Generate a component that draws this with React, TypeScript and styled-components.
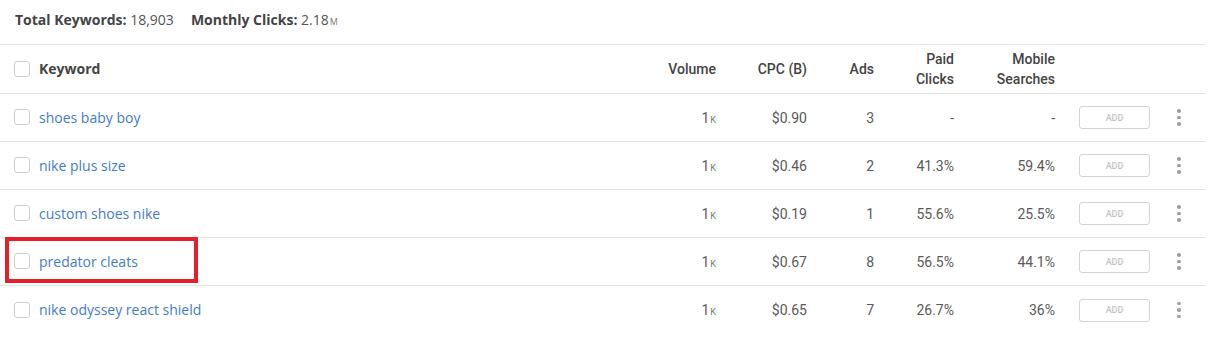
import styled, { createGlobalStyle } from "styled-components"

type Row = {
    keyword: string
    volume: string
    cpc: string
    ads: number
    paid: string
    mobile: string
    marked?: boolean
}

const rows: Row[] = [
    { keyword: "shoes baby boy", volume: "1", cpc: "$0.90", ads: 3, paid: "-", mobile: "-" },
    { keyword: "nike plus size", volume: "1", cpc: "$0.46", ads: 2, paid: "41.3%", mobile: "59.4%" },
    { keyword: "custom shoes nike", volume: "1", cpc: "$0.19", ads: 1, paid: "55.6%", mobile: "25.5%" },
    { keyword: "predator cleats", volume: "1", cpc: "$0.67", ads: 8, paid: "56.5%", mobile: "44.1%", marked: true },
    { keyword: "nike odyssey react shield", volume: "1", cpc: "$0.65", ads: 7, paid: "26.7%", mobile: "36%" },
]

export default function App() {
    return (
        <>
            <GlobalStyle />
            <Page>
                <Stats>
                    <Stat>
                        <b>Total Keywords:</b> 18,903
                    </Stat>
                    <Stat>
                        <b>Monthly Clicks:</b> 2.18<Unit>M</Unit>
                    </Stat>
                </Stats>
                <HeadRow>
                    <KeywordCell>
                        <Box />
                        <HeadLabel>Keyword</HeadLabel>
                    </KeywordCell>
                    <HeadCell>Volume</HeadCell>
                    <HeadCell>CPC (B)</HeadCell>
                    <HeadCell>Ads</HeadCell>
                    <HeadCell>
                        Paid
                        <br />
                        Clicks
                    </HeadCell>
                    <HeadCell>
                        Mobile
                        <br />
                        Searches
                    </HeadCell>
                    <div />
                    <div />
                </HeadRow>
                {rows.map((r) => (
                    <DataRow key={r.keyword}>
                        <KeywordCell $marked={r.marked}>
                            <Box />
                            <KeywordLink>{r.keyword}</KeywordLink>
                        </KeywordCell>
                        <Cell>
                            {r.volume}
                            <Unit>K</Unit>
                        </Cell>
                        <Cell>{r.cpc}</Cell>
                        <Cell>{r.ads}</Cell>
                        <Cell>{r.paid}</Cell>
                        <Cell>{r.mobile}</Cell>
                        <ButtonCell>
                            <AddButton>ADD</AddButton>
                        </ButtonCell>
                        <MenuCell>
                            <Dots>
                                <span />
                                <span />
                                <span />
                            </Dots>
                        </MenuCell>
                    </DataRow>
                ))}
            </Page>
        </>
    )
}

const GlobalStyle = createGlobalStyle`
    body {
        margin: 0;
        background: #fff;
        font-family: "Open Sans", sans-serif;
    }
`

const Page = styled.div`
    width: 1205px;
`

const Stats = styled.div`
    height: 45px;
    display: flex;
    align-items: center;
    gap: 17px;
    padding: 0 0 5px 15px;
    box-sizing: border-box;
    border-bottom: 1px solid #e3e3e3;
`

const Stat = styled.span`
    font-size: 14px;
    color: #555;

    b {
        font-weight: 700;
        color: #444;
    }
`

// small capital unit after a number, like the k in 1k
const Unit = styled.span`
    font-size: 9px;
    text-transform: uppercase;
    margin-left: 1px;
    color: #777;
`

const grid = `
    display: grid;
    grid-template-columns: 636px 80px 91px 67px 80px 101px 95px 55px;
    align-items: center;
`

const HeadRow = styled.div`
    ${grid}
    height: 49px;
    box-sizing: border-box;
    border-bottom: 1px solid #e3e3e3;
`

const DataRow = styled.div`
    ${grid}
    height: 48px;
    box-sizing: border-box;
    border-bottom: 1px solid #e3e3e3;

    &:last-child {
        border-bottom: none;
    }
`

const KeywordCell = styled.div<{ $marked?: boolean }>`
    position: relative;
    display: flex;
    align-items: center;
    gap: 9px;
    padding: 0 0 1px 14px;
    box-sizing: border-box;
    height: 100%;

    &::after {
        content: "";
        display: ${(p) => (p.$marked ? "block" : "none")};
        position: absolute;
        left: 5px;
        top: -1px;
        width: 193px;
        height: 46px;
        border: 4px solid #e5202a;
        box-sizing: border-box;
    }
`

const Box = styled.span`
    width: 14px;
    height: 14px;
    border: 1px solid #cfcfd4;
    border-radius: 3px;
    background: #fff;
`

const HeadLabel = styled.span`
    font-size: 14px;
    font-weight: 700;
    color: #444;
`

const KeywordLink = styled.a`
    font-size: 14px;
    color: #3f7dca;
    text-decoration: none;
    cursor: pointer;
`

const HeadCell = styled.div`
    text-align: right;
    font-family: Roboto, sans-serif;
    font-weight: 500;
    font-size: 14px;
    line-height: 20px;
    color: #444;
`

const Cell = styled.div`
    text-align: right;
    font-family: Roboto, sans-serif;
    font-size: 14px;
    color: #5a5a5a;
`

const ButtonCell = styled.div`
    display: flex;
    justify-content: flex-end;
`

const AddButton = styled.button`
    width: 71px;
    height: 23px;
    border: 1.5px solid #d4d4d4;
    border-radius: 3px;
    background: #fff;
    font-family: Roboto, sans-serif;
    font-size: 9px;
    font-weight: 500;
    color: #c4c4c4;
    padding: 0;
`

const MenuCell = styled.div`
    display: flex;
    justify-content: center;
    padding-left: 3px;
`

const Dots = styled.div`
    display: flex;
    flex-direction: column;
    gap: 3px;

    span {
        width: 3.5px;
        height: 3.5px;
        border-radius: 50%;
        background: #a0a0a0;
    }
`
